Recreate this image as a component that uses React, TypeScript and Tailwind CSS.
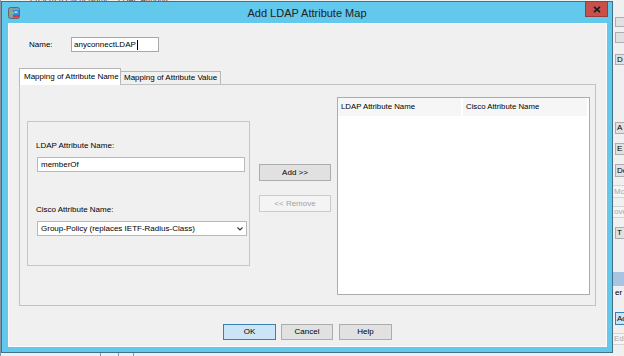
import React from "react";

function AppIcon() {
  return (
    <svg width="12" height="12" viewBox="0 0 12 12">
      <rect x="0.5" y="0.5" width="11" height="11" rx="2" fill="#8a9aa6" stroke="#5c6a74" strokeWidth="1" />
      <rect x="5" y="3" width="6" height="5" fill="#2f8fe0" />
      <rect x="5" y="8" width="6" height="2.5" fill="#e0353a" />
      <path d="M1.5 6 L4 3.8 L4 8.2 Z" fill="#5bd16a" />
      <rect x="3.5" y="5.2" width="2.5" height="1.6" fill="#5bd16a" />
      <rect x="6.5" y="4.5" width="3" height="1.5" fill="#bfe3ff" />
    </svg>
  );
}

function BgButton({ mt, h, label, disabled, blue }: { mt: number; h: number; label?: string; disabled?: boolean; blue?: boolean }) {
  return (
    <div
      className={
        "w-[20px] shrink-0 text-[8px] leading-none flex items-center overflow-hidden whitespace-nowrap " +
        (blue
          ? "ml-[2px] pl-[1px] border bg-[#cce4f7] border-[#3c7fb1] text-black"
          : disabled
          ? "ml-0 pl-[1px] border-y bg-[#f4f4f4] border-[#d4d4d4] text-[#a8a8a8]"
          : "ml-[2px] pl-[1px] border bg-[#e1e1e1] border-[#adadad] text-black")
      }
      style={{ marginTop: mt, height: h }}
    >
      {label}
    </div>
  );
}

export default function App() {
  return (
    <div className="relative w-[624px] h-[356px] overflow-hidden bg-[#f0f0f0] [font-family:'Liberation_Sans',Arial,sans-serif] text-[8px] text-black">
      {/* background application (behind the dialog) */}
      <div className="absolute inset-0">
        <div className="absolute left-[30px] top-[-6px] text-[8px] text-[#444] whitespace-nowrap">Preferred Client Name</div>
        <div className="absolute left-[118px] top-[-6px] text-[8px] text-[#444] whitespace-nowrap">LDAP Attribute</div>
        <div className="absolute left-0 top-0 w-[1px] h-full bg-[#8696a4]" />
        <div className="absolute left-[100px] top-[353px] w-[1px] h-[3px] bg-[#9a9a9a]" />
        <div className="absolute left-[118px] top-[353px] w-[1px] h-[3px] bg-[#9a9a9a]" />
        <div className="absolute left-[133px] top-[353px] w-[1px] h-[3px] bg-[#9a9a9a]" />
        <div className="absolute left-[613px] top-0 w-[11px] h-full flex flex-col bg-[#f0f0f0]">
          <BgButton mt={17} h={10} />
          <BgButton mt={5} h={11} />
          <BgButton mt={11} h={11} label="D" />
          <BgButton mt={57} h={12} label="A" />
          <BgButton mt={9} h={12} label="E" />
          <BgButton mt={9} h={13} label="De" />
          <BgButton mt={8} h={13} label="Mov" disabled />
          <BgButton mt={8} h={12} label="ove" disabled />
          <BgButton mt={9} h={12} label="T" />
          <div className="mt-[33px] h-[14px] bg-[#a9c3e3] shrink-0" />
          <div className="mt-[2px] h-[10px] pl-[2px] text-[8px] leading-[10px] shrink-0">er</div>
          <BgButton mt={14} h={13} label="Add" blue />
          <BgButton mt={8} h={12} label="Edit" disabled />
        </div>
      </div>

      {/* dialog window */}
      <div className="absolute left-[1px] top-[1px] w-[612px] h-[352px] border border-[#41708c] bg-[#62c8ec] flex flex-col">
        <div className="relative h-[21px] shrink-0 flex items-center justify-center">
          <div className="absolute left-[6px] top-[5px]">
            <AppIcon />
          </div>
          <div className="text-[11px] leading-none text-[#222] pt-[1px]">Add LDAP Attribute Map</div>
          <div className="absolute right-[4px] top-[-1px] w-[23px] h-[16px] bg-[#c7514a] border border-[#9a3b35] flex items-center justify-center">
            <svg width="8" height="7" viewBox="0 0 8 7">
              <path d="M1 0.8 L7 6.2 M7 0.8 L1 6.2" stroke="#1c1c1c" strokeWidth="1.7" />
            </svg>
          </div>
        </div>

        <div className="ml-[6px] mr-[5px] mb-[5px] h-[324px] shrink-0 bg-[#f0f0f0] border border-[#fbfbfb] flex flex-col">
          {/* Name row */}
          <div className="mt-[13px] pl-[20px] flex items-center h-[15px]">
            <div className="w-[42px]">Name:</div>
            <div className="w-[88px] h-[15px] bg-white border border-[#a9a9a9] flex items-center pl-[2px] leading-none">
              anyconnectLDAP
              <span className="ml-[1px] inline-block w-[1px] h-[10px] bg-black" />
            </div>
          </div>

          {/* Tabs */}
          <div className="mt-[15px] ml-[10px] flex items-end h-[17px] relative z-10">
            <div className="w-[102px] h-[17px] bg-white border border-b-0 border-[#b7b7b7] pl-[4px] flex items-center leading-none mb-[-1px] pb-[1px]">
              Mapping of Attribute Name
            </div>
            <div className="w-[100px] h-[13px] bg-[#f0f0f0] border border-l-0 border-b-0 border-[#b7b7b7] pl-[3px] flex items-center leading-none">
              Mapping of Attribute Value
            </div>
          </div>

          {/* Tab panel */}
          <div className="ml-[10px] w-[577px] h-[222px] border border-[#c2c2c2] bg-[#f0f0f0] flex items-start">
            {/* group box */}
            <div className="ml-[7px] mt-[36px] w-[223px] h-[145px] border border-[#c6c6c6] flex flex-col shrink-0">
              <div className="mt-[19px] ml-[8px] h-[10px] leading-[10px]">LDAP Attribute Name:</div>
              <div className="mt-[6px] ml-[9px] w-[208px] h-[15px] bg-white border border-[#b9b9b9] flex items-center pl-[3px] leading-none">
                memberOf
              </div>
              <div className="mt-[33px] ml-[8px] h-[10px] leading-[10px]">Cisco Attribute Name:</div>
              <div className="mt-[6px] ml-[9px] w-[210px] h-[15px] bg-white border border-[#b9b9b9] flex items-center pl-[3px] pr-[3px] leading-none">
                <span className="flex-1">Group-Policy (replaces IETF-Radius-Class)</span>
                <svg width="6" height="4" viewBox="0 0 6 4">
                  <path d="M0.5 0.5 L3 3 L5.5 0.5" stroke="#333" strokeWidth="1.1" fill="none" />
                </svg>
              </div>
            </div>

            {/* buttons */}
            <div className="ml-[9px] mt-[79px] w-[72px] flex flex-col shrink-0">
              <div className="h-[17px] bg-[#e1e1e1] border border-[#adadad] flex items-center justify-center leading-none">
                Add &gt;&gt;
              </div>
              <div className="mt-[14px] h-[17px] bg-[#f4f4f4] border border-[#cbcbcb] text-[#a3a3a3] flex items-center justify-center leading-none">
                &lt;&lt; Remove
              </div>
            </div>

            {/* table */}
            <div className="ml-[6px] mt-[12px] w-[253px] h-[198px] border border-[#acacac] bg-white shrink-0 flex flex-col">
              <div className="flex h-[18px] text-[7.8px] leading-none">
                <div className="w-[125px] h-full bg-[#f6f6f6] border-r-2 border-white pl-[3px] flex items-center">
                  LDAP Attribute Name
                </div>
                <div className="w-[124px] h-full bg-[#f6f6f6] pl-[3px] flex items-center">Cisco Attribute Name</div>
              </div>
              <div className="flex-1 bg-white" />
            </div>
          </div>

          {/* bottom buttons */}
          <div className="mt-[18px] flex justify-center">
            <div className="w-[53px] h-[16px] bg-[#cce4f7] border border-[#3c7fb1] flex items-center justify-center leading-none">
              OK
            </div>
            <div className="ml-[5px] w-[52px] h-[16px] bg-[#e1e1e1] border border-[#adadad] flex items-center justify-center leading-none">
              Cancel
            </div>
            <div className="ml-[6px] w-[53px] h-[16px] bg-[#e1e1e1] border border-[#adadad] flex items-center justify-center leading-none">
              Help
            </div>
          </div>
        </div>
      </div>
    </div>
  );
}
